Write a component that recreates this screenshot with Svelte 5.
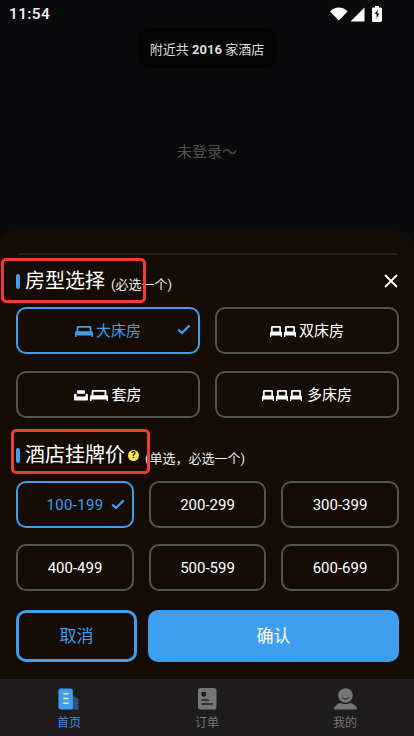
<script>
  const bed = "M0 11V6.6C0 5.8.6 5.2 1.3 5.2H1.6V1.3C1.6.6 2.2 0 2.9 0H15.1C15.8 0 16.4.6 16.4 1.3V5.2H16.7C17.4 5.2 18 5.8 18 6.6V11H16.5V9.4H1.5V11ZM3.4 5.2H14.6V1.7H3.4Z";
  const single = "M0 11V7C0 6.3.5 5.8 1 5.8V1.4C1 .6 1.6 0 2.4 0H9.6C10.4 0 11 .6 11 1.4V5.8C11.5 5.8 12 6.3 12 7V11H10.7V9.5H1.3V11ZM2.7 5.6H9.3V1.7H2.7Z";
  const rooms = [
    { name: "大床房", icons: ["big"], on: true },
    { name: "双床房", icons: ["s", "s"] },
    { name: "套房", icons: ["sofa", "big"] },
    { name: "多床房", icons: ["s", "s", "s"], wide: true }
  ];
  const prices = ["100-199", "200-299", "300-399", "400-499", "500-599", "600-699"];
</script>

<div class="phone">
  <header class="status">
    <span class="time">11:54</span>
    <div class="status-icons">
      <svg width="18" height="14" viewBox="0 0 18 14"><path d="M0 4.4C2.4 1.9 5.5.6 8.8.6s6.4 1.3 8.8 3.8L8.8 13.6Z" fill="#fff"/></svg>
      <svg width="15" height="15" viewBox="0 0 15 15"><path d="M14.5.5V14.5H.5Z" fill="#fff"/></svg>
      <svg class="batt" width="10" height="16" viewBox="0 0 10 16"><path fill-rule="evenodd" d="M3 0H7V1.4H8.6C9.4 1.4 10 2 10 2.8V14.5C10 15.3 9.4 16 8.6 16H1.4C.6 16 0 15.3 0 14.5V2.8C0 2 .6 1.4 1.4 1.4H3ZM5.6 3.4 2.8 8H4.6V12.6L7.4 7.4H5.6Z" fill="#fff"/></svg>
    </div>
  </header>

  <main class="page">
    <div class="toast"><span>附近共 <b>2016</b> 家酒店</span></div>
    <p class="empty">未登录～</p>
  </main>

  <section class="sheet">
    <div class="rule"></div>
    <div class="head first">
      <i class="bar"></i><h2>房型选择</h2><small>(必选一个)</small>
      <svg class="close" width="16" height="16" viewBox="0 0 16 16"><path d="M2 2 14 14M14 2 2 14" stroke="#fff" stroke-width="1.8"/></svg>
    </div>
    <div class="grid two">
      {#each rooms as r}
        <button class="opt" class:on={r.on} class:wide={r.wide}>
          <span class="icons">
            {#each r.icons as ic}
              {#if ic === "big"}
                <svg width="18" height="11" viewBox="0 0 18 11"><path d={bed} fill="currentColor" fill-rule="evenodd"/></svg>
              {:else if ic === "s"}
                <svg width="12" height="11" viewBox="0 0 12 11"><path d={single} fill="currentColor" fill-rule="evenodd"/></svg>
              {:else}
                <svg width="14" height="11" viewBox="0 0 14 11"><path d="M3 1.2C3 .6 3.5.2 4 .2H10C10.5.2 11 .6 11 1.2V3.8H3ZM0 5C0 4.3.6 3.8 1.3 3.8S2.6 4.3 2.6 5V6.4H11.4V5C11.4 4.3 12 3.8 12.7 3.8S14 4.3 14 5V9.4C14 10 13.5 10.4 13 10.4H1C.5 10.4 0 10 0 9.4Z" fill="currentColor"/></svg>
              {/if}
            {/each}
          </span>
          <span class="label">{r.name}</span>
          {#if r.on}
            <svg class="tick" width="14" height="11" viewBox="0 0 14 11"><path d="M1.2 5.6 5 9 12.6 1.4" fill="none" stroke="currentColor" stroke-width="2.2"/></svg>
          {/if}
        </button>
      {/each}
    </div>

    <div class="head second">
      <i class="bar"></i><h2>酒店挂牌价</h2>
      <span class="help">?</span><small class="tight">(单选，必选一个)</small>
    </div>
    <div class="grid three">
      {#each prices as p, i}
        <button class="opt price" class:on={i === 0}>
          <span>{p}</span>
          {#if i === 0}
            <svg class="tick-price" width="14" height="11" viewBox="0 0 14 11"><path d="M1.2 5.6 5 9 12.6 1.4" fill="none" stroke="currentColor" stroke-width="2.2"/></svg>
          {/if}
        </button>
      {/each}
    </div>

    <div class="actions">
      <button class="cancel">取消</button>
      <button class="confirm">确认</button>
    </div>
    <div class="mark mark-a"></div>
    <div class="mark mark-b"></div>
  </section>

  <nav class="tabs">
    <div class="tab active">
      <svg width="24" height="23" viewBox="0 0 24 23">
        <path d="M14 7 22 11.5V22.5H14Z" fill="#2b5478"/>
        <rect x="1" y="0.5" width="15" height="22" rx="2.5" fill="#3e9ff0"/>
        <path d="M6 6H11.5M6 11H11.5M6 16H11.5" stroke="#f3ee6a" stroke-width="1.6"/>
      </svg>
      <span>首页</span>
    </div>
    <div class="tab">
      <svg width="19" height="22" viewBox="0 0 19 22">
        <rect width="18.5" height="21.5" rx="2.5" fill="#757575"/>
        <path d="M3.5 4H8V7.5L5.8 9 3.5 7.5Z" fill="#1f1c1d"/>
        <path d="M3.5 12H11M3.5 16H15" stroke="#1f1c1d" stroke-width="1.5"/>
      </svg>
      <span>订单</span>
    </div>
    <div class="tab">
      <svg width="23" height="22" viewBox="0 0 23 22">
        <circle cx="11.5" cy="7.5" r="7.3" fill="#757575"/>
        <path d="M0 21.5C.5 17.5 4 15.4 7 15 9 16.4 14 16.4 16 15 19 15.4 22.5 17.5 23 21.5Z" fill="#757575"/>
        <path d="M8 9.6C9.5 11.4 13.5 11.4 15 9.6" fill="none" stroke="#1f1c1d" stroke-width="1"/>
      </svg>
      <span>我的</span>
    </div>
  </nav>
</div>

<style>
  :global(body) { margin: 0; background: #0a0a0c; }
  .phone {
    position: relative; width: 414px; height: 736px; overflow: hidden;
    display: flex; flex-direction: column; background: #0a0a0c; color: #fff;
    font-family: Roboto, "Noto Sans CJK SC", sans-serif;
  }
  .status { height: 28px; display: flex; align-items: center; justify-content: space-between; padding: 0 32px 0 9px; flex: none; }
  .time { font-size: 15.5px; font-weight: 500; letter-spacing: .35px; color: #f4f4f4; }
  .status-icons { display: flex; align-items: center; gap: 2px; }
  .batt { margin-left: 5px; }
  .page { flex: 1; display: flex; flex-direction: column; align-items: center; }
  .toast { height: 40px; width: 139px; box-sizing: border-box; display: flex; align-items: center; justify-content: center; background: #050505; border-radius: 12px; font-size: 13px; color: #ddd; white-space: pre; }
  .toast b { font-weight: 700; font-size: 13px; }
  .empty { margin: 74px 0 0; font-size: 15px; line-height: 20px; color: #505050; }
  .sheet { position: absolute; left: 0; right: 0; top: 231px; height: 448px; box-sizing: border-box; padding: 0 15px 0 16px; background: #140c05; border-radius: 16px 16px 0 0; }
  .rule { height: 2px; margin: 22px 2px 0 2px; background: #26211c; }
  .head { position: relative; display: flex; align-items: center; height: 40px; }
  .head.first { margin-top: 6px; }
  .head.second { margin-top: 17px; }
  .bar { width: 4px; height: 15px; margin-right: 5px; border-radius: 2px; background: #3e9ff0; }
  h2 { margin: 0; font-size: 20px; font-weight: 400; line-height: 26px; color: #fff; }
  small { font-size: 13px; margin: 4px 0 0 6px; color: #eee; }
  small.tight { margin: 5px 0 0 6px; }
  .help { width: 11px; height: 11px; margin: 1px 0 0 3px; border-radius: 50%; background: #f3e94a; color: #140c05; font-size: 9px; font-weight: 700; line-height: 11px; text-align: center; }
  .close { position: absolute; right: 0; top: 12px; }
  .grid { display: grid; margin-top: 6px; }
  .two { grid-template-columns: 184px 184px; column-gap: 15px; row-gap: 17px; }
  .three { grid-template-columns: 118px 117px 118px; column-gap: 15px; row-gap: 16px; }
  .opt { position: relative; height: 47px; display: flex; align-items: center; justify-content: center; gap: 3px; box-sizing: border-box; padding: 0; background: transparent; border: 2px solid #55554f; border-radius: 10px; color: #fff; font: inherit; font-size: 15px; }
  .opt.wide { gap: 5px; }
  .opt.on { border-color: #3e9ff0; color: #3e9ff0; }
  .label { margin-top: -2px; }
  .price.on { letter-spacing: .35px; }
  .icons { display: flex; gap: 2px; margin-top: 1px; }
  .tick { position: absolute; right: 7px; top: 15px; }
  .tick-price { position: absolute; right: 7px; top: 16px; }
  .actions { display: flex; gap: 11px; margin-top: 19px; }
  .actions button { height: 52px; border-radius: 10px; font: inherit; font-size: 17px; padding: 0 0 3px; box-sizing: border-box; }
  .cancel { width: 121px; border: 3px solid #3e9ff0; background: transparent; color: #3e9ff0; }
  .confirm { width: 251px; border: 0; background: #3e9ff0; color: #fff; }
  .mark { position: absolute; box-sizing: border-box; border: 3px solid #ef3f2a; border-radius: 5px; }
  .mark-a { left: 1px; top: 27px; width: 145px; height: 45px; }
  .mark-b { left: 11px; top: 198px; width: 139px; height: 45px; }
  .tabs { flex: none; position: relative; z-index: 1; height: 57px; display: flex; background: #1f1c1d; }
  .tab { flex: 1; display: flex; flex-direction: column; align-items: center; padding-top: 9px; box-sizing: border-box; color: #757575; font-size: 12px; }
  .tab svg { height: 22px; flex: none; }
  .tab span { margin-top: 5px; line-height: 17px; }
  .tab.active { color: #3e8fd8; }
</style>
